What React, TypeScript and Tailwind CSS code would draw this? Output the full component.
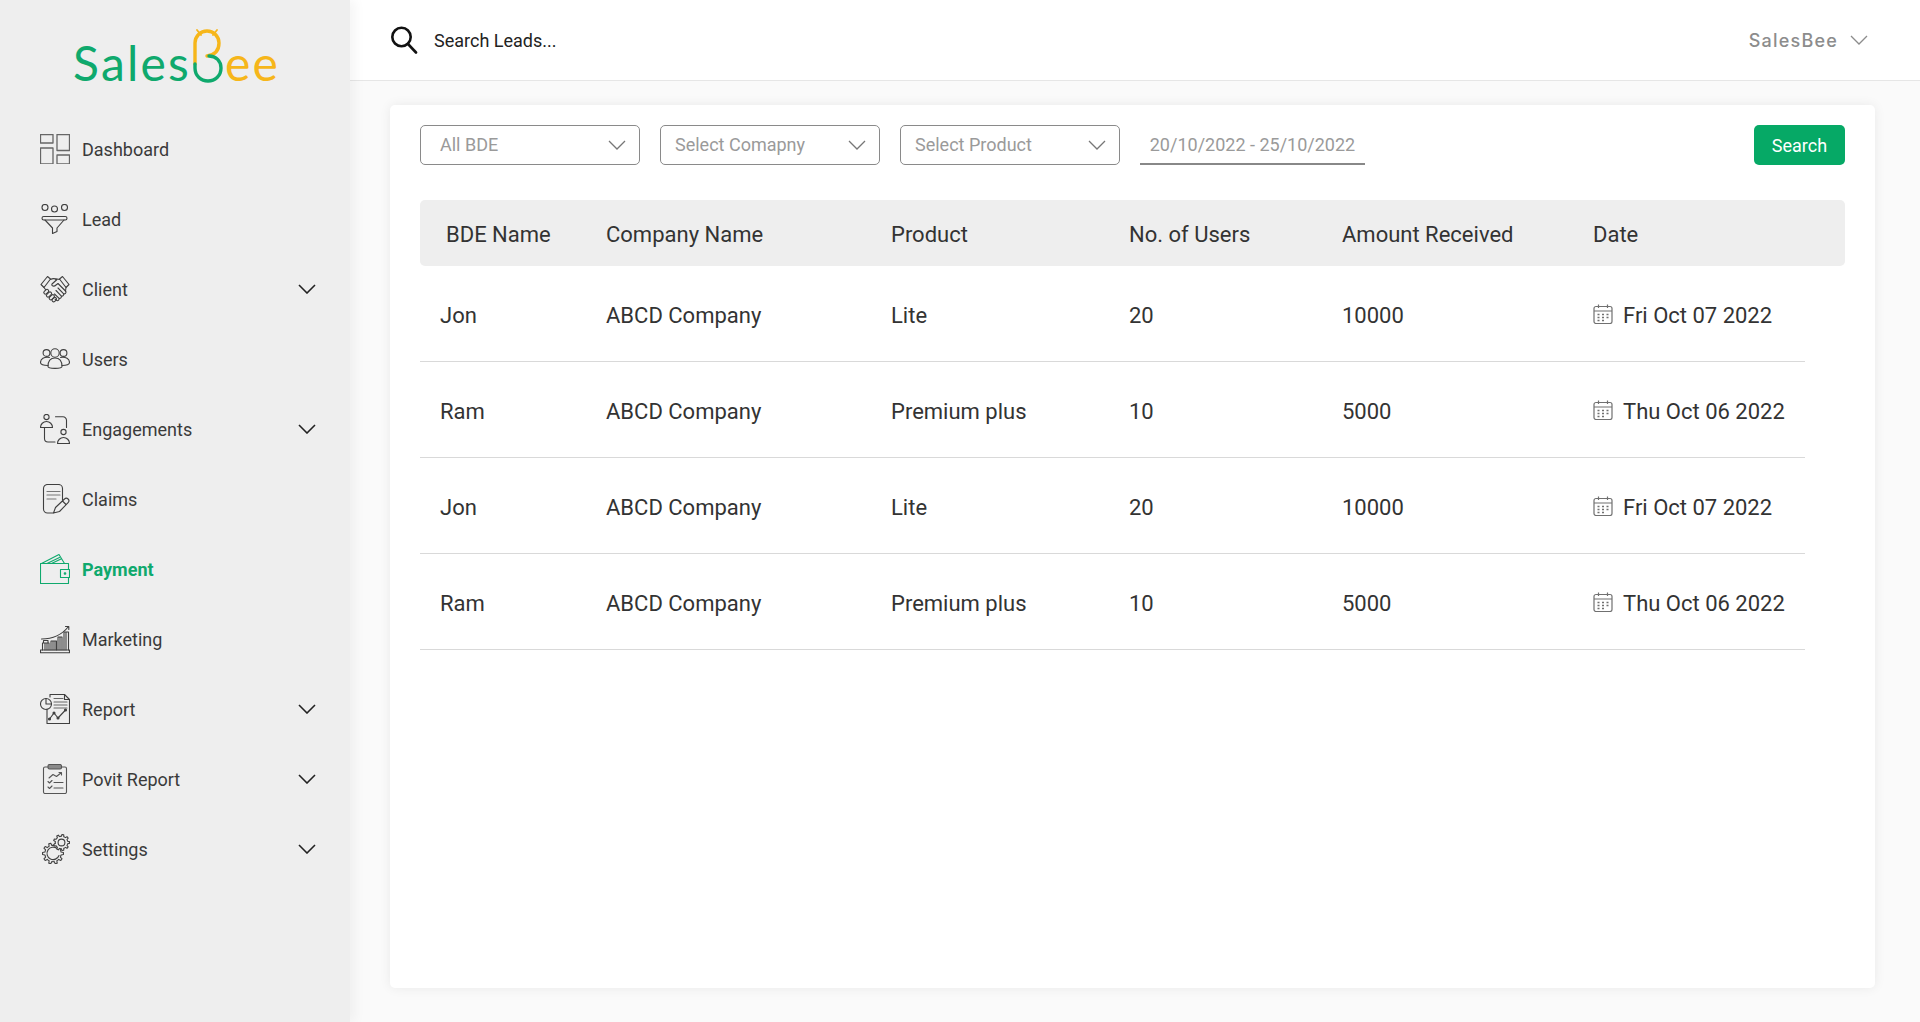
import type { ReactNode } from "react";

const green = "#0fa96d";
const yellow = "#f6b61a";

// gear outline used by the settings icon
function gearPath(cx: number, cy: number, r: number, teeth: number) {
  const inner = r * 0.78;
  const step = (Math.PI * 2) / teeth;
  let d = "";
  for (let i = 0; i < teeth; i++) {
    const a = i * step;
    const pts = [
      [inner, a - step * 0.5],
      [inner, a - step * 0.28],
      [r, a - step * 0.16],
      [r, a + step * 0.16],
      [inner, a + step * 0.28],
    ];
    pts.forEach(([rad, ang], j) => {
      const x = (cx + rad * Math.cos(ang)).toFixed(2);
      const y = (cy + rad * Math.sin(ang)).toFixed(2);
      d += `${i === 0 && j === 0 ? "M" : "L"}${x} ${y} `;
    });
  }
  return d + "Z";
}

function Icon({ children, color = "#3f3f3f" }: { children: ReactNode; color?: string }) {
  return (
    <svg width="30" height="30" viewBox="0 0 30 30" fill="none" stroke={color} strokeWidth="1.1" strokeLinecap="round" strokeLinejoin="round" className="shrink-0">
      {children}
    </svg>
  );
}

const icons: Record<string, ReactNode> = {
  Dashboard: (
    <Icon color="#666666">
      <rect x="0.5" y="0.5" width="12.5" height="8.5" strokeWidth="1.3" />
      <rect x="0.5" y="14" width="12.5" height="16" strokeWidth="1.3" />
      <rect x="17" y="0.5" width="12.5" height="16" strokeWidth="1.3" />
      <rect x="17" y="21" width="12.5" height="9" strokeWidth="1.3" />
    </Icon>
  ),
  Lead: (
    <Icon>
      <circle cx="5" cy="3.5" r="3" />
      <circle cx="14.5" cy="5" r="3" />
      <circle cx="24.5" cy="3.5" r="3" />
      <rect x="2" y="12.5" width="25" height="3.5" rx="1.7" />
      <path d="M5 16 L12.5 24 V29.5 L17 27.5 V24 L24 16" />
    </Icon>
  ),
  Client: (
    <Icon>
      <path d="M1 10.5 L7.5 2.5 L10.5 5 L4 13.5 Z" />
      <path d="M29 10.5 L22.5 2.5 L19.5 5 L26 13.5 Z" />
      <path d="M10.5 5.5 C13 4 15 4.5 17 5.5 L12 10 C11 12 14 13 16 11 L18 9.5 L25.5 17" />
      <path d="M19.5 5.5 C18 4.7 17 5 15.5 5.2" />
      <path d="M25.5 17 a1.6 1.6 0 0 1 -2.3 2.3 L18 14 M23.2 19.3 a1.6 1.6 0 0 1 -2.3 2.3 L16 16.5 M20.9 21.6 a1.6 1.6 0 0 1 -2.3 2.3 L14.5 20 M18.6 23.9 a1.6 1.6 0 0 1 -2.3 2.3 L15 25" />
      <path d="M26 13.5 L25.5 17 M4 13.5 L5.5 15.5" />
      <rect x="3.5" y="16.2" width="5.5" height="3.2" rx="1.6" transform="rotate(-45 6.2 17.8)" />
      <rect x="6" y="18.9" width="6" height="3.2" rx="1.6" transform="rotate(-45 9 20.5)" />
      <rect x="8.8" y="21.7" width="6" height="3.2" rx="1.6" transform="rotate(-45 11.8 23.3)" />
      <rect x="11.8" y="24" width="5" height="3.2" rx="1.6" transform="rotate(-45 14.3 25.6)" />
    </Icon>
  ),
  Users: (
    <Icon>
      <circle cx="15" cy="9" r="4.2" />
      <circle cx="6.5" cy="9" r="3.4" />
      <circle cx="23.5" cy="9" r="3.4" />
      <path d="M8 22.5 C8 16.5 11 14 15 14 S22 16.5 22 22.5 C22 25 8 25 8 22.5 Z" />
      <path d="M9.5 13.5 C4 12.5 0.5 15 0.5 18.5 C0.5 20.5 3.5 21.5 8 21.5" />
      <path d="M20.5 13.5 C26 12.5 29.5 15 29.5 18.5 C29.5 20.5 26.5 21.5 22 21.5" />
    </Icon>
  ),
  Engagements: (
    <Icon>
      <circle cx="6.5" cy="3" r="2.6" />
      <path d="M0.5 13.5 a6 6 0 0 1 12 0 Z" />
      <path d="M15.5 2.8 H23 a3.5 3.5 0 0 1 3.5 3.5 V13.5" />
      <circle cx="23.5" cy="18" r="2.6" />
      <path d="M17.5 29.5 a6 6 0 0 1 12 0 Z" />
      <path d="M4.5 14 V24.5 a3.5 3.5 0 0 0 3.5 3.5 H15" />
    </Icon>
  ),
  Claims: (
    <Icon>
      <path d="M22.5 16 V4.5 a4 4 0 0 0 -4 -4 H7.5 a4 4 0 0 0 -4 4 V25 a4 4 0 0 0 4 4 H13" />
      <path d="M7 7.5 H20 M7 11 H20 M7 15 H16" stroke="#777777" strokeWidth="1.2" />
      <path d="M13.5 29 L15.5 23.5 L24.5 15 a2.2 2.2 0 0 1 3.6 3.6 L19.5 27.5 Z M22.5 17 L26 20.5" />
    </Icon>
  ),
  Payment: (
    <Icon color={green}>
      <rect x="0.5" y="9.5" width="28" height="20" />
      <path d="M1.5 9.5 L19 0.5 L24.5 9.5 M7 9.5 L19.5 3.5 M11.5 9.5 L21 5" />
      <rect x="20.5" y="15.5" width="9" height="8" fill="#eeeeee" />
      <circle cx="25" cy="19.5" r="0.8" fill={green} />
    </Icon>
  ),
  Marketing: (
    <Icon>
      <rect x="0.5" y="26" width="29" height="2.8" />
      <path d="M2.5 26 V19 H9 V26 M3.5 19 V16.5 H8 V19 M5 19 V26 M7 19 V26" />
      <path d="M11 26 V17 H16.5 V26 M13 17 V26 M15 17 V26" />
      <path d="M18 26 V13 H22 V26 M20 13 V26" />
      <path d="M24 26 V8 H28.5 V26 M26 8 V26" />
      <path d="M1.5 15 C10 15 21 12 28.5 2.5 M25.5 2.5 H28.8 V5.5" />
    </Icon>
  ),
  Report: (
    <Icon>
      <path d="M7 15 V29.5 H29.5 V5.5 L24.5 0.5 H10 V3" />
      <path d="M24.5 0.5 V5.5 H29.5" />
      <circle cx="6" cy="10" r="5.5" />
      <path d="M6 4.5 V10 H11.5" />
      <path d="M14 4.5 H23 M14 8 H27 M14 11 H27 M14 14 H27" stroke="#666666" />
      <path d="M9.5 25 L14 19 L18 24 L25.5 16" />
      <circle cx="9.5" cy="25" r="1" fill="#3f3f3f" />
      <circle cx="14" cy="19" r="1" fill="#3f3f3f" />
      <circle cx="18" cy="24" r="1" fill="#3f3f3f" />
      <circle cx="25.5" cy="16" r="1" fill="#3f3f3f" />
    </Icon>
  ),
  "Povit Report": (
    <Icon color="#555555">
      <rect x="3.5" y="3" width="23" height="26.5" rx="1.5" />
      <rect x="8" y="0.5" width="13.5" height="4.5" rx="1.5" fill="#8a8a8a" />
      <path d="M9 14 L13 10.5 L16.5 12.5 L21.5 8.5 M19 8.5 H21.5 V11" />
      <path d="M8 17.5 L9.5 19 L12 16.5 M8 23 L9.5 24.5 L12 22 M14 18.5 H23 M14 24 H23" />
    </Icon>
  ),
  Settings: (
    <Icon>
      <path d={gearPath(13, 19.5, 10.5, 10)} />
      <path d="M17 14.5 A6.2 6.2 0 1 0 19 21.5" />
      <path d={gearPath(21.5, 8.5, 8, 9)} fill="#eeeeee" />
      <circle cx="21.5" cy="8.5" r="3.4" />
    </Icon>
  ),
};

const menu = [
  { label: "Dashboard" },
  { label: "Lead" },
  { label: "Client", caret: true },
  { label: "Users" },
  { label: "Engagements", caret: true },
  { label: "Claims" },
  { label: "Payment", active: true },
  { label: "Marketing" },
  { label: "Report", caret: true },
  { label: "Povit Report", caret: true },
  { label: "Settings", caret: true },
];

const rows = [
  { name: "Jon", company: "ABCD Company", product: "Lite", users: "20", amount: "10000", date: "Fri Oct 07 2022" },
  { name: "Ram", company: "ABCD Company", product: "Premium plus", users: "10", amount: "5000", date: "Thu Oct 06 2022" },
  { name: "Jon", company: "ABCD Company", product: "Lite", users: "20", amount: "10000", date: "Fri Oct 07 2022" },
  { name: "Ram", company: "ABCD Company", product: "Premium plus", users: "10", amount: "5000", date: "Thu Oct 06 2022" },
];

function Chevron({ color = "#222222", width = 1.6 }: { color?: string; width?: number }) {
  return (
    <svg width="18" height="10" viewBox="0 0 18 10" fill="none" stroke={color} strokeWidth={width} className="shrink-0">
      <path d="M1 1 L9 9 L17 1" />
    </svg>
  );
}

function Logo() {
  return (
    <div className="flex h-[114px] items-start pl-[73px] pt-[33px] font-['Lato',sans-serif] text-[48px] leading-[60px] font-normal">
      <span className="text-[#0fa96d] tracking-[2.2px]">Sales</span>
      <svg width="34" height="56" viewBox="0 0 34 56" fill="none" strokeWidth="3.4" strokeLinecap="round" className="-mt-[4px] shrink-0">
        <path d="M4 35 V14 a12 12 0 0 1 24 0 c0 8 -5 12 -12 13" stroke={yellow} />
        <path d="M10 6 L6 1 M22 6 L26 1" stroke={yellow} strokeWidth="1.8" />
        <path d="M18 27 c7 0 12 5 12 12 c0 8 -6 13 -13 13 c-7 0 -13 -5 -13 -13 V35" stroke={green} />
      </svg>
      <span className="text-[#f6b61a] tracking-[2.2px]">ee</span>
    </div>
  );
}

function Sidebar() {
  return (
    <aside className="relative z-10 h-full w-[350px] shrink-0 bg-[#eeeeee] shadow-[6px_0_10px_rgba(0,0,0,0.04)]">
      <Logo />
      <nav>
        {menu.map((item) => (
          <div key={item.label} className="flex h-[70px] items-center pl-10 pr-[34px]">
            {icons[item.label]}
            <span className={`ml-3 flex-1 text-[18px] ${item.active ? "font-bold text-[#0fa96d]" : "text-[#3a3a3a]"}`}>{item.label}</span>
            {item.caret && <Chevron />}
          </div>
        ))}
      </nav>
    </aside>
  );
}

function Select({ label, pad }: { label: string; pad: string }) {
  return (
    <div className={`flex h-10 w-[220px] items-center justify-between rounded-[5px] border border-[#8a8a8a] pr-[13px] text-[18px] text-[#9a9a9a] ${pad}`}>
      <span className="-mt-[2px]">{label}</span>
      <Chevron color="#777777" width={1.3} />
    </div>
  );
}

function CalendarIcon() {
  return (
    <svg width="20" height="20" viewBox="0 0 20 20" fill="none" stroke="#707070" strokeWidth="1.2" className="-mt-[3px] shrink-0">
      <rect x="1" y="2.5" width="18" height="17" rx="2" />
      <path d="M1 7 H19 M5.5 0.5 V4 M14.5 0.5 V4" />
      <path d="M4.5 10.5 H6.5 M9 10.5 H11 M13.5 10.5 H15.5 M4.5 13.5 H6.5 M9 13.5 H11 M13.5 13.5 H15.5 M4.5 16.5 H6.5 M9 16.5 H11" strokeWidth="1.4" />
    </svg>
  );
}

const columns = "grid grid-cols-[186px_285px_238px_213px_251px_1fr] items-center";

export default function App() {
  return (
    <div className="flex h-screen w-full overflow-hidden bg-[#fafafa] font-['Roboto',sans-serif]">
      <Sidebar />
      <div className="flex min-w-0 flex-1 flex-col">
        <header className="flex h-[81px] shrink-0 items-center justify-between border-b border-[#e6e6e6] bg-white pl-[40px] pr-[52px]">
          <div className="flex items-center">
            <svg width="28" height="28" viewBox="0 0 28 28" fill="none" stroke="#111111" strokeWidth="2.6" strokeLinecap="round">
              <circle cx="11.5" cy="11" r="9.2" />
              <path d="M18 18 L26 26.5" />
            </svg>
            <span className="ml-4 text-[18px] text-[#222222]">Search Leads...</span>
          </div>
          <div className="flex items-center gap-[12px]">
            <span className="font-['Inter',sans-serif] text-[18px] font-medium tracking-[1.2px] text-[#8c8c8c]">SalesBee</span>
            <Chevron color="#8c8c8c" width={1.3} />
          </div>
        </header>
        <main className="min-h-0 flex-1 pb-[34px] pl-10 pr-[45px] pt-6">
          <div className="h-full rounded-[5px] bg-white px-[30px] pt-5 shadow-[0_0_12px_rgba(0,0,0,0.07)]">
            <div className="flex items-center gap-5">
              <Select label="All BDE" pad="pl-[19px]" />
              <Select label="Select Comapny" pad="pl-[14px]" />
              <Select label="Select Product" pad="pl-[14px]" />
              <div className="flex h-10 w-[225px] items-center justify-center border-b-2 border-[#888888] text-[18px] text-[#9a9a9a]">20/10/2022 - 25/10/2022</div>
              <button className="ml-auto h-10 w-[91px] rounded-[5px] bg-[#06a966] text-[18px] text-white">Search</button>
            </div>

            <div className={`${columns} mt-[35px] h-[66px] rounded-[5px] bg-[#eeeeee] pt-[2px] text-[22px] text-[#333333]`}>
              <div className="pl-[26px]">BDE Name</div>
              <div>Company Name</div>
              <div>Product</div>
              <div>No. of Users</div>
              <div>Amount Received</div>
              <div>Date</div>
            </div>

            <div className="w-[1385px]">
              {rows.map((row, i) => (
                <div key={i} className={`${columns} h-[96px] border-b border-[#d9d9d9] pt-[3px] text-[22px] text-[#333333]`}>
                  <div className="pl-5">{row.name}</div>
                  <div>{row.company}</div>
                  <div>{row.product}</div>
                  <div>{row.users}</div>
                  <div>{row.amount}</div>
                  <div className="flex items-center gap-[10px] whitespace-nowrap">
                    <CalendarIcon />
                    {row.date}
                  </div>
                </div>
              ))}
            </div>
          </div>
        </main>
      </div>
    </div>
  );
}
